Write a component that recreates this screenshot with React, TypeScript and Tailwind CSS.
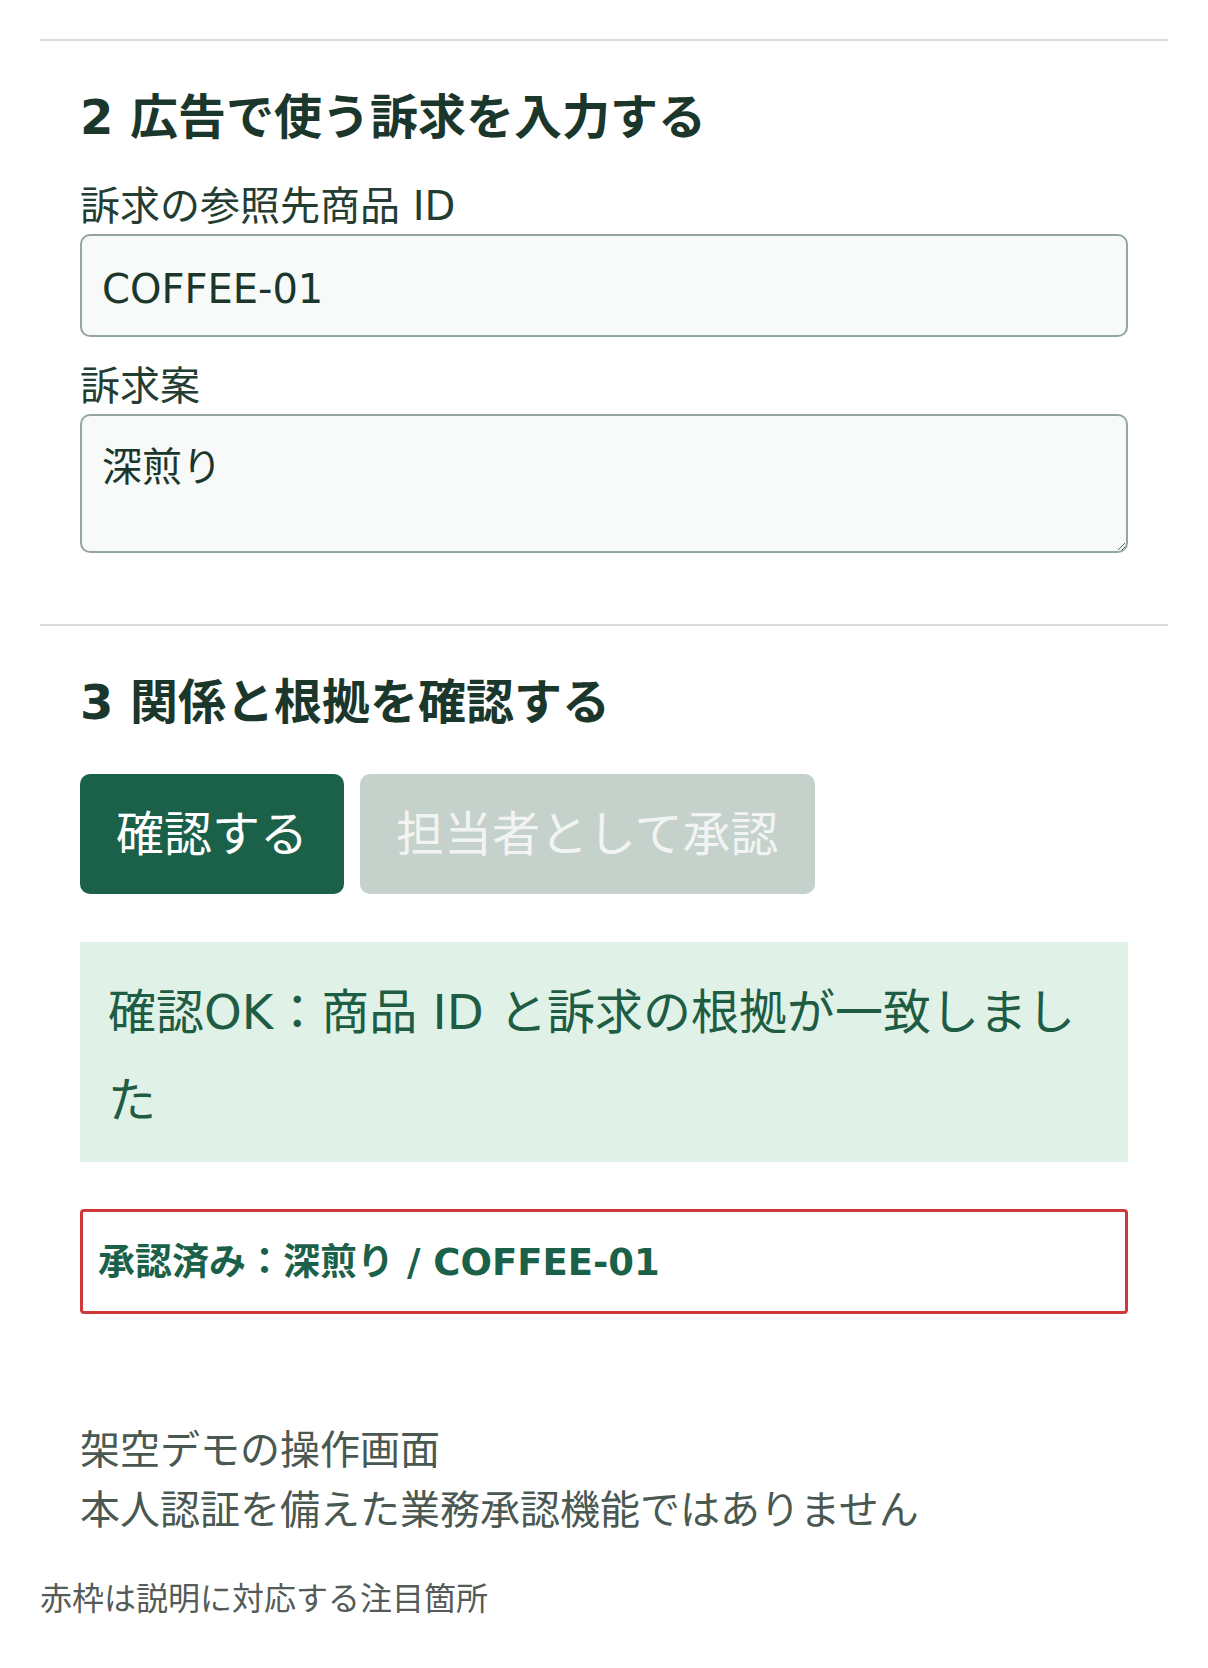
import { FunctionComponent } from "react";

const jp = "font-['DejaVu_Sans','Noto_Sans_CJK_JP',sans-serif]";

const App: FunctionComponent = () => {
  return (
    <div className={`min-h-[1668px] bg-white text-[#1c3a2f] ${jp}`}>
      <div className="px-10 pt-[39px]">
        {/* step 2 */}
        <section className="border-t-2 border-[#d6dddb] px-10 pt-[42px] pb-[71px]">
          <h2 className="m-0 pt-[4px] text-[48px] font-bold leading-[60px] text-[#1b372c]">
            2 広告で使う訴求を入力する
          </h2>
          <label className="mt-[28px] block pt-[6px] text-[40px] leading-[50px] text-[#233d33]">
            訴求の参照先商品 ID
          </label>
          <input
            readOnly
            defaultValue="COFFEE-01"
            className={`mt-[3px] block h-[103px] w-full rounded-[10px] border-2 border-[#93a79d] bg-[#f7faf8] px-[20px] pt-[6px] text-[40px] leading-[56px] text-[#1b372c] outline-none ${jp}`}
          />
          <label className="mt-[18px] block pt-[6px] text-[40px] leading-[50px] text-[#233d33]">
            訴求案
          </label>
          <textarea
            readOnly
            defaultValue="深煎り"
            className={`mt-[3px] block h-[139px] w-full rounded-[10px] border-2 border-[#93a79d] bg-[#f7faf8] px-[20px] pt-[23px] text-[40px] leading-[56px] text-[#1b372c] outline-none ${jp}`}
          />
        </section>

        {/* step 3 */}
        <section className="border-t-2 border-[#d6dddb] px-10 pt-[42px]">
          <h2 className="m-0 pt-[4px] text-[48px] font-bold leading-[60px] text-[#1b372c]">
            3 関係と根拠を確認する
          </h2>
          <div className="mt-[42px] flex gap-4">
            <button className="h-[120px] rounded-[10px] bg-[#1b6149] px-9 text-[48px] text-white">
              確認する
            </button>
            <button
              disabled
              className="h-[120px] rounded-[10px] bg-[#c5d1cb] px-9 text-[48px] text-[#f1f4f2]"
            >
              担当者として承認
            </button>
          </div>
          <div className="mt-[48px] bg-[#e0f1e7] px-7 pt-[26px] pb-[18px] text-[48px] leading-[88px] text-[#1e5c43]">
            確認OK：商品 ID と訴求の根拠が一致しました
          </div>
          <div className="mt-[47px] flex h-[105px] items-center rounded-[4px] border-[3px] border-[#d13838] px-[15px] pt-[2px] text-[37px] font-bold text-[#1b6149]">
            承認済み：深煎り / COFFEE-01
          </div>
          <div className="mt-[103px] text-[40px] text-[#4a5852]">
            <p className="pt-[6px] leading-[54px]">架空デモの操作画面</p>
            <p className="pt-[6px] leading-[54px]">本人認証を備えた業務承認機能ではありません</p>
          </div>
        </section>

        <p className="mt-[38px] text-[32px] leading-[48px] text-[#555b58]">
          赤枠は説明に対応する注目箇所
        </p>
      </div>
    </div>
  );
};

export default App;
